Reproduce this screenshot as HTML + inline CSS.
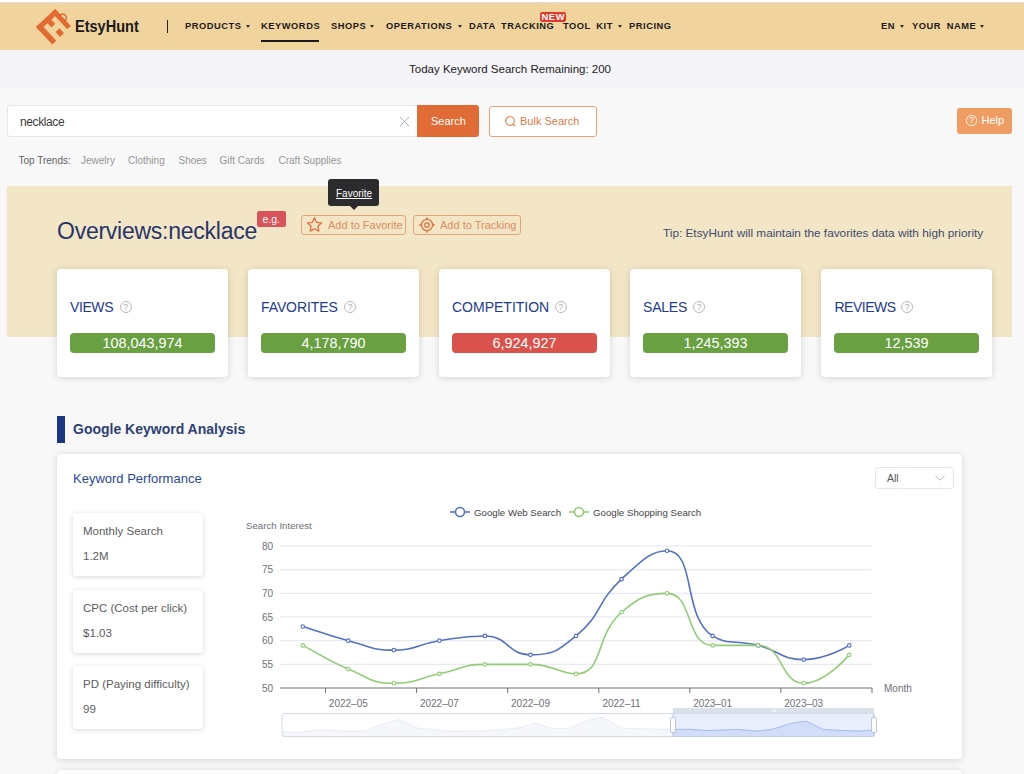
<!DOCTYPE html>
<html><head><meta charset="utf-8">
<style>
*{box-sizing:border-box;margin:0;padding:0}
html,body{width:1024px;height:774px;overflow:hidden}
body{position:relative;background:#f8f8f8;font-family:"Liberation Sans",sans-serif;color:#333}
.a{position:absolute;white-space:nowrap}
#topline{left:0;top:0;width:1024px;height:3px;background:#fff;border-bottom:1px solid #dcdcdc}
#header{left:0;top:3px;width:1024px;height:47px;background:#f0d39d}
.nav{font-size:9.3px;font-weight:bold;color:#1a1a1a;top:21.2px;letter-spacing:0.55px;word-spacing:2.5px}
.caret{left:0;top:0;width:0;height:0;border-left:2.5px solid transparent;border-right:2.5px solid transparent;border-top:3px solid #333}
#subbar{left:0;top:50px;width:1024px;height:39px;background:#f5f4f9}
.card{background:#fff;border-radius:4px;box-shadow:0 1px 7px rgba(0,0,0,0.15)}
.lbl{font-size:14px;color:#233b8c;top:299px}
.q{width:12px;height:12px;border:1px solid #b9b9b9;border-radius:50%;font-size:8.5px;line-height:10px;text-align:center;color:#aaa;top:301px}
.bar{height:20px;width:145px;top:333px;border-radius:4px;color:#fff;font-size:14.4px;line-height:20px;text-align:center}
.green{background:#69a041}
.red{background:#d9534c}
.info{background:#fff;border-radius:3px;box-shadow:0 1px 5px rgba(0,0,0,0.16);left:73px;width:130px;height:63px}
.info .t{position:absolute;left:10px;top:12px;font-size:11.5px;color:#5c5c5c;white-space:nowrap}
.info .v{position:absolute;left:10px;top:37px;font-size:11.5px;color:#5c5c5c;white-space:nowrap}
.trend{top:155px;font-size:10px;color:#969696}
.obtn{height:20px;top:215px;border:1px solid #e7a477;border-radius:3px;background:transparent}
.obtn span{position:absolute;top:3px;font-size:11px;color:#d98c5e}
</style></head><body>
<div class="a" id="topline"></div>
<div class="a" id="header"></div>

<!-- logo -->
<svg class="a" style="left:0;top:0" width="90" height="50" viewBox="0 0 90 50">
<g transform="translate(55.2,9.1) rotate(47)" fill="#e26b34">
<rect x="0" y="0" width="5.1" height="26.3"/>
<rect x="0" y="0" width="23" height="4.9"/>
<rect x="0" y="10" width="10.8" height="5.3"/>
<rect x="0" y="20.8" width="24" height="5.5"/>
<rect x="17" y="10" width="6.6" height="5.5"/>
<path d="M7.9,0.3 A3.6,3.6 0 0 1 15.1,0.3" fill="none" stroke="#e26b34" stroke-width="1.5"/><circle cx="8" cy="0.8" r="0.6" fill="#d9412a"/><circle cx="15" cy="0.8" r="0.6" fill="#d9412a"/>
</g>
</svg>
<div class="a" style="left:74.5px;top:17px;font-size:16.5px;font-weight:bold;color:#1a1a1a;transform:scaleX(0.88);transform-origin:0 0">EtsyHunt</div>
<div class="a" style="left:166.5px;top:19.5px;width:1.6px;height:13px;background:#222"></div>

<div class="a nav" style="left:185px">PRODUCTS</div><div class="a caret" style="left:245.5px;top:25px"></div>
<div class="a nav" style="left:261px">KEYWORDS</div>
<div class="a" style="left:261px;top:40px;width:58px;height:2px;background:#1a1a1a"></div>
<div class="a nav" style="left:331px">SHOPS</div><div class="a caret" style="left:369.5px;top:25px"></div>
<div class="a nav" style="left:386px">OPERATIONS</div><div class="a caret" style="left:457.5px;top:25px"></div>
<div class="a nav" style="left:469px">DATA TRACKING</div>
<div class="a" style="left:540px;top:12px;width:26px;height:10px;background:#e03a2f;border-radius:2px;color:#fff;font-size:9.3px;font-weight:bold;line-height:10.5px;letter-spacing:0.6px;text-indent:0.6px;text-align:center">NEW</div>
<div class="a nav" style="left:563px">TOOL KIT</div><div class="a caret" style="left:617.5px;top:25px"></div>
<div class="a nav" style="left:629px">PRICING</div>
<div class="a nav" style="left:881px">EN</div><div class="a caret" style="left:899.5px;top:25px"></div>
<div class="a nav" style="left:912px">YOUR NAME</div><div class="a caret" style="left:980px;top:25px"></div>

<div class="a" id="subbar"></div>
<div class="a" style="left:409px;top:63px;font-size:11.5px;color:#222">Today Keyword Search Remaining: 200</div>

<!-- search -->
<div class="a" style="left:7px;top:105px;width:411px;height:32px;background:#fff;border:1px solid #e6e6ec;border-radius:3px 0 0 3px"></div>
<div class="a" style="left:20px;top:115px;font-size:12px;color:#3a3a3a;letter-spacing:-0.4px">necklace</div>
<svg class="a" style="left:399px;top:116px" width="11" height="11" viewBox="0 0 11 11"><path d="M1,1 L10,10 M10,1 L1,10" stroke="#b0b4bc" stroke-width="1"/></svg>
<div class="a" style="left:417px;top:105px;width:62px;height:32px;background:#e06b35;border-radius:0 3px 3px 0"></div>
<div class="a" style="left:431px;top:114.5px;font-size:11px;color:#fff">Search</div>
<div class="a" style="left:489px;top:106px;width:108px;height:31px;background:#fff;border:1px solid #eaa27c;border-radius:3px"></div>
<svg class="a" style="left:504px;top:115px" width="13" height="13" viewBox="0 0 13 13"><circle cx="6" cy="6" r="4.3" fill="none" stroke="#e07a45" stroke-width="1.1"/><path d="M9.2,9.2 L11,11" stroke="#e07a45" stroke-width="1.1"/></svg>
<div class="a" style="left:520px;top:115px;font-size:11px;color:#e07a45">Bulk Search</div>
<div class="a" style="left:957px;top:107.5px;width:55px;height:26px;background:#ef9d63;border-radius:3px"></div>
<svg class="a" style="left:965px;top:114px" width="13" height="13" viewBox="0 0 13 13"><circle cx="6.5" cy="6.5" r="5.2" fill="none" stroke="#fff" stroke-width="0.9"/><text x="6.6" y="9.4" text-anchor="middle" font-size="9" fill="#fff" font-family="Liberation Sans">?</text></svg>
<div class="a" style="left:981.5px;top:114px;font-size:11px;color:#fff">Help</div>

<div class="a trend" style="left:18.5px;color:#636363">Top Trends:</div>
<div class="a trend" style="left:81px">Jewelry</div>
<div class="a trend" style="left:128px">Clothing</div>
<div class="a trend" style="left:178.5px">Shoes</div>
<div class="a trend" style="left:219.5px">Gift Cards</div>
<div class="a trend" style="left:278.5px">Craft Supplies</div>

<!-- overview panel -->
<div class="a" style="left:7px;top:186px;width:1005px;height:151px;background:#f3e6c6"></div>
<div class="a" style="left:57px;top:218px;font-size:23px;color:#27356b;letter-spacing:-0.25px">Overviews:necklace</div>
<div class="a" style="left:257px;top:211px;width:28.5px;height:15.5px;background:#d8535a;border-radius:2px;color:#fff;font-size:10.5px;line-height:17px;text-align:center">e.g.</div>

<div class="a" style="left:328px;top:179px;width:51px;height:26.5px;background:#2c2c2e;border-radius:3px"></div>
<div class="a" style="left:348.5px;top:204.5px;width:0;height:0;border-left:5px solid transparent;border-right:5px solid transparent;border-top:5px solid #2c2c2e"></div>
<div class="a" style="left:336px;top:187.5px;font-size:10px;color:#fff;text-decoration:underline">Favorite</div>

<div class="a obtn" style="left:301px;width:105px"><span style="left:26px">Add to Favorite</span></div>
<svg class="a" style="left:305px;top:216px" width="19" height="18" viewBox="0 0 19 18"><path d="M9.5,1.8 L11.6,6.3 L16.5,6.9 L12.9,10.2 L13.8,15.1 L9.5,12.7 L5.2,15.1 L6.1,10.2 L2.5,6.9 L7.4,6.3 Z" fill="none" stroke="#e2703c" stroke-width="1.3" stroke-linejoin="round"/></svg>
<div class="a obtn" style="left:413px;width:108px"><span style="left:26px">Add to Tracking</span></div>
<svg class="a" style="left:418px;top:216px" width="18" height="18" viewBox="0 0 18 18"><circle cx="9" cy="9" r="5.6" fill="none" stroke="#e2703c" stroke-width="1.3"/><circle cx="9" cy="9" r="2.2" fill="none" stroke="#e2703c" stroke-width="1.3"/><path d="M9,1.2 V4 M9,14 V16.8 M1.2,9 H4 M14,9 H16.8" stroke="#e2703c" stroke-width="1.3"/></svg>

<div class="a" style="left:663px;top:225.5px;font-size:11.8px;color:#3d4a6e">Tip: EtsyHunt will maintain the favorites data with high priority</div>

<!-- stat cards -->
<div class="a card" style="left:57px;top:269px;width:171px;height:108px"></div>
<div class="a card" style="left:248px;top:269px;width:171px;height:108px"></div>
<div class="a card" style="left:439px;top:269px;width:171px;height:108px"></div>
<div class="a card" style="left:630px;top:269px;width:171px;height:108px"></div>
<div class="a card" style="left:821px;top:269px;width:171px;height:108px"></div>

<div class="a lbl" style="left:70px;letter-spacing:-0.4px">VIEWS</div><div class="a q" style="left:119.5px">?</div>
<div class="a lbl" style="left:261px;letter-spacing:-0.1px">FAVORITES</div><div class="a q" style="left:344px">?</div>
<div class="a lbl" style="left:452px">COMPETITION</div><div class="a q" style="left:554.5px">?</div>
<div class="a lbl" style="left:643px;letter-spacing:-0.2px">SALES</div><div class="a q" style="left:693px">?</div>
<div class="a lbl" style="left:834.5px;letter-spacing:-0.5px">REVIEWS</div><div class="a q" style="left:901px">?</div>

<div class="a bar green" style="left:70px">108,043,974</div>
<div class="a bar green" style="left:261px">4,178,790</div>
<div class="a bar red" style="left:452px">6,924,927</div>
<div class="a bar green" style="left:643px">1,245,393</div>
<div class="a bar green" style="left:834px">12,539</div>

<!-- section -->
<div class="a" style="left:57px;top:416px;width:8px;height:27px;background:#1c3585"></div>
<div class="a" style="left:73px;top:421px;font-size:14px;font-weight:bold;color:#2e3f74">Google Keyword Analysis</div>

<div class="a card" style="left:57px;top:454px;width:905px;height:304.5px"></div>
<div class="a" style="left:73px;top:471px;font-size:13px;color:#2a4796">Keyword Performance</div>
<div class="a" style="left:875px;top:467px;width:78.5px;height:21.5px;border:1px solid #e4e6eb;border-radius:3px;background:#fff"></div>
<div class="a" style="left:887px;top:472px;font-size:10.5px;color:#555">All</div>
<svg class="a" style="left:934px;top:474px" width="12" height="8" viewBox="0 0 12 8"><path d="M1.5,1.8 L6,6.2 L10.5,1.8" fill="none" stroke="#b9bcc4" stroke-width="1"/></svg>

<div class="a info" style="top:513px"><div class="t">Monthly Search</div><div class="v">1.2M</div></div>
<div class="a info" style="top:589.5px"><div class="t">CPC (Cost per click)</div><div class="v">$1.03</div></div>
<div class="a info" style="top:666px"><div class="t">PD (Paying difficulty)</div><div class="v">99</div></div>

<svg class="a" style="left:0;top:0" width="1024" height="774" viewBox="0 0 1024 774">
<line x1="280" y1="546.0" x2="872" y2="546.0" stroke="#e2e5f2" stroke-width="1"/>
<line x1="280" y1="569.7" x2="872" y2="569.7" stroke="#e2e5f2" stroke-width="1"/>
<line x1="280" y1="593.3" x2="872" y2="593.3" stroke="#e2e5f2" stroke-width="1"/>
<line x1="280" y1="617.0" x2="872" y2="617.0" stroke="#e2e5f2" stroke-width="1"/>
<line x1="280" y1="640.7" x2="872" y2="640.7" stroke="#e2e5f2" stroke-width="1"/>
<line x1="280" y1="664.3" x2="872" y2="664.3" stroke="#e2e5f2" stroke-width="1"/>
<line x1="280" y1="688" x2="872" y2="688" stroke="#6e7079" stroke-width="1"/>
<line x1="325.5" y1="688" x2="325.5" y2="693" stroke="#6e7079" stroke-width="1"/>
<line x1="416.6" y1="688" x2="416.6" y2="693" stroke="#6e7079" stroke-width="1"/>
<line x1="507.7" y1="688" x2="507.7" y2="693" stroke="#6e7079" stroke-width="1"/>
<line x1="598.8" y1="688" x2="598.8" y2="693" stroke="#6e7079" stroke-width="1"/>
<line x1="689.8" y1="688" x2="689.8" y2="693" stroke="#6e7079" stroke-width="1"/>
<line x1="780.9" y1="688" x2="780.9" y2="693" stroke="#6e7079" stroke-width="1"/>
<line x1="872.0" y1="688" x2="872.0" y2="693" stroke="#6e7079" stroke-width="1"/>
<text x="273" y="549.6" text-anchor="end" font-size="10" fill="#6e7079" font-family="Liberation Sans">80</text>
<text x="273" y="573.3" text-anchor="end" font-size="10" fill="#6e7079" font-family="Liberation Sans">75</text>
<text x="273" y="596.9" text-anchor="end" font-size="10" fill="#6e7079" font-family="Liberation Sans">70</text>
<text x="273" y="620.6" text-anchor="end" font-size="10" fill="#6e7079" font-family="Liberation Sans">65</text>
<text x="273" y="644.3" text-anchor="end" font-size="10" fill="#6e7079" font-family="Liberation Sans">60</text>
<text x="273" y="667.9" text-anchor="end" font-size="10" fill="#6e7079" font-family="Liberation Sans">55</text>
<text x="273" y="691.6" text-anchor="end" font-size="10" fill="#6e7079" font-family="Liberation Sans">50</text>
<text x="348.3" y="707" text-anchor="middle" font-size="10" fill="#6e7079" font-family="Liberation Sans">2022–05</text>
<text x="439.4" y="707" text-anchor="middle" font-size="10" fill="#6e7079" font-family="Liberation Sans">2022–07</text>
<text x="530.5" y="707" text-anchor="middle" font-size="10" fill="#6e7079" font-family="Liberation Sans">2022–09</text>
<text x="621.5" y="707" text-anchor="middle" font-size="10" fill="#6e7079" font-family="Liberation Sans">2022–11</text>
<text x="712.6" y="707" text-anchor="middle" font-size="10" fill="#6e7079" font-family="Liberation Sans">2023–01</text>
<text x="803.7" y="707" text-anchor="middle" font-size="10" fill="#6e7079" font-family="Liberation Sans">2023–03</text>
<text x="884" y="691.5" font-size="10" fill="#6e7079" font-family="Liberation Sans">Month</text>
<text x="246" y="528.5" font-size="9.7" fill="#6e7079" font-family="Liberation Sans">Search Interest</text>
<path d="M302.77,626.47 C325.54,633.57 325.25,634.68 348.31,640.67 C370.79,646.51 371.08,650.13 393.85,650.13 C416.62,650.13 416.44,644.24 439.38,640.67 C461.97,637.14 463.00,635.93 484.92,635.93 C508.54,635.93 507.69,654.87 530.46,654.87 C553.23,654.87 557.61,651.23 576.00,635.93 C603.15,613.36 595.32,603.66 621.54,579.13 C640.86,561.06 650.81,550.73 667.08,550.73 C696.35,550.73 681.88,616.27 712.62,635.93 C727.41,645.40 735.67,639.56 758.15,645.40 C781.21,651.39 780.92,659.60 803.69,659.60 C826.46,659.60 849.23,645.40 849.23,645.40" fill="none" stroke="#5470c6" stroke-width="1.6"/>
<circle cx="302.77" cy="626.47" r="1.75" fill="#fff" stroke="#5470c6" stroke-width="1.15"/>
<circle cx="348.31" cy="640.67" r="1.75" fill="#fff" stroke="#5470c6" stroke-width="1.15"/>
<circle cx="393.85" cy="650.13" r="1.75" fill="#fff" stroke="#5470c6" stroke-width="1.15"/>
<circle cx="439.38" cy="640.67" r="1.75" fill="#fff" stroke="#5470c6" stroke-width="1.15"/>
<circle cx="484.92" cy="635.93" r="1.75" fill="#fff" stroke="#5470c6" stroke-width="1.15"/>
<circle cx="530.46" cy="654.87" r="1.75" fill="#fff" stroke="#5470c6" stroke-width="1.15"/>
<circle cx="576.00" cy="635.93" r="1.75" fill="#fff" stroke="#5470c6" stroke-width="1.15"/>
<circle cx="621.54" cy="579.13" r="1.75" fill="#fff" stroke="#5470c6" stroke-width="1.15"/>
<circle cx="667.08" cy="550.73" r="1.75" fill="#fff" stroke="#5470c6" stroke-width="1.15"/>
<circle cx="712.62" cy="635.93" r="1.75" fill="#fff" stroke="#5470c6" stroke-width="1.15"/>
<circle cx="758.15" cy="645.40" r="1.75" fill="#fff" stroke="#5470c6" stroke-width="1.15"/>
<circle cx="803.69" cy="659.60" r="1.75" fill="#fff" stroke="#5470c6" stroke-width="1.15"/>
<circle cx="849.23" cy="645.40" r="1.75" fill="#fff" stroke="#5470c6" stroke-width="1.15"/>
<path d="M302.77,645.40 C325.54,657.23 324.71,659.25 348.31,669.07 C370.24,678.19 370.79,683.27 393.85,683.27 C416.33,683.27 416.62,678.53 439.38,673.80 C462.15,669.07 461.91,664.33 484.92,664.33 C507.45,664.33 507.93,664.33 530.46,664.33 C553.47,664.33 558.79,673.80 576.00,673.80 C604.33,673.80 593.84,636.74 621.54,612.27 C639.38,596.50 648.12,593.33 667.08,593.33 C693.66,593.33 685.16,645.40 712.62,645.40 C730.69,645.40 738.36,645.40 758.15,645.40 C783.90,645.40 779.80,683.27 803.69,683.27 C825.34,683.27 849.23,654.87 849.23,654.87" fill="none" stroke="#91cc75" stroke-width="1.6"/>
<circle cx="302.77" cy="645.40" r="1.75" fill="#fff" stroke="#91cc75" stroke-width="1.15"/>
<circle cx="348.31" cy="669.07" r="1.75" fill="#fff" stroke="#91cc75" stroke-width="1.15"/>
<circle cx="393.85" cy="683.27" r="1.75" fill="#fff" stroke="#91cc75" stroke-width="1.15"/>
<circle cx="439.38" cy="673.80" r="1.75" fill="#fff" stroke="#91cc75" stroke-width="1.15"/>
<circle cx="484.92" cy="664.33" r="1.75" fill="#fff" stroke="#91cc75" stroke-width="1.15"/>
<circle cx="530.46" cy="664.33" r="1.75" fill="#fff" stroke="#91cc75" stroke-width="1.15"/>
<circle cx="576.00" cy="673.80" r="1.75" fill="#fff" stroke="#91cc75" stroke-width="1.15"/>
<circle cx="621.54" cy="612.27" r="1.75" fill="#fff" stroke="#91cc75" stroke-width="1.15"/>
<circle cx="667.08" cy="593.33" r="1.75" fill="#fff" stroke="#91cc75" stroke-width="1.15"/>
<circle cx="712.62" cy="645.40" r="1.75" fill="#fff" stroke="#91cc75" stroke-width="1.15"/>
<circle cx="758.15" cy="645.40" r="1.75" fill="#fff" stroke="#91cc75" stroke-width="1.15"/>
<circle cx="803.69" cy="683.27" r="1.75" fill="#fff" stroke="#91cc75" stroke-width="1.15"/>
<circle cx="849.23" cy="654.87" r="1.75" fill="#fff" stroke="#91cc75" stroke-width="1.15"/>
<line x1="450" y1="512" x2="470" y2="512" stroke="#5470c6" stroke-width="1.6"/>
<circle cx="460" cy="512" r="4.5" fill="#fff" stroke="#5470c6" stroke-width="1.6"/>
<text x="474" y="515.5" font-size="9.7" fill="#444" font-family="Liberation Sans">Google Web Search</text>
<line x1="569" y1="512" x2="589" y2="512" stroke="#91cc75" stroke-width="1.6"/>
<circle cx="579" cy="512" r="4.5" fill="#fff" stroke="#91cc75" stroke-width="1.6"/>
<text x="593" y="515.5" font-size="9.7" fill="#444" font-family="Liberation Sans">Google Shopping Search</text>
<rect x="282" y="713.5" width="592" height="23.0" rx="2" fill="none" stroke="#d2dbee" stroke-width="1"/>
<polygon points="282.0,736.5 282.0,731.6 299.0,732.4 315.0,730.4 333.0,730.4 349.0,731.4 365.0,731.0 383.0,724.0 399.0,719.6 417.0,728.0 433.0,729.6 449.0,731.4 467.0,731.0 486.4,730.8 502.8,729.7 519.2,727.7 535.6,723.0 552.0,728.3 569.5,728.3 586.9,720.5 603.3,717.4 620.7,728.1 637.1,728.7 654.6,729.1 673.0,729.4 690.8,729.4 706.0,730.6 722.0,730.0 737.8,729.4 756.0,731.1 772.0,729.4 792.4,723.0 806.3,721.2 822.8,729.4 843.0,730.6 858.4,731.1 874.0,730.1 874.0,736.5" fill="#d2dbee" fill-opacity="0.22"/>
<polyline points="282.0,731.6 299.0,732.4 315.0,730.4 333.0,730.4 349.0,731.4 365.0,731.0 383.0,724.0 399.0,719.6 417.0,728.0 433.0,729.6 449.0,731.4 467.0,731.0 486.4,730.8 502.8,729.7 519.2,727.7 535.6,723.0 552.0,728.3 569.5,728.3 586.9,720.5 603.3,717.4 620.7,728.1 637.1,728.7 654.6,729.1 673.0,729.4 690.8,729.4 706.0,730.6 722.0,730.0 737.8,729.4 756.0,731.1 772.0,729.4 792.4,723.0 806.3,721.2 822.8,729.4 843.0,730.6 858.4,731.1 874.0,730.1" fill="none" stroke="#d2dbee" stroke-width="0.6" stroke-opacity="0.8"/>
<rect x="673" y="713.5" width="201" height="23.0" fill="#879ff6" fill-opacity="0.18"/>
<polygon points="673.0,736.5 673.0,729.4 690.8,729.4 706.0,730.6 722.0,730.0 737.8,729.4 756.0,731.1 772.0,729.4 792.4,723.0 806.3,721.2 822.8,729.4 843.0,730.6 858.4,731.1 874.0,730.1 874.0,736.5" fill="#8fb0f7" fill-opacity="0.17"/>
<polyline points="673.0,729.4 690.8,729.4 706.0,730.6 722.0,730.0 737.8,729.4 756.0,731.1 772.0,729.4 792.4,723.0 806.3,721.2 822.8,729.4 843.0,730.6 858.4,731.1 874.0,730.1" fill="none" stroke="#8fb0f7" stroke-width="0.7"/>
<rect x="673" y="708" width="201" height="5.5" fill="#dbe0ea" fill-opacity="1"/>
<line x1="673" y1="713.5" x2="673" y2="736.5" stroke="#b8c6e6" stroke-width="1"/>
<line x1="874" y1="713.5" x2="874" y2="736.5" stroke="#b8c6e6" stroke-width="1"/>
<rect x="670.5" y="717.5" width="5" height="15" rx="1.5" fill="#fff" stroke="#acb8d1" stroke-width="0.8"/>
<rect x="871.5" y="717.5" width="5" height="15" rx="1.5" fill="#fff" stroke="#acb8d1" stroke-width="0.8"/>
<rect x="772" y="709.6" width="0.8" height="2.4" fill="#fff"/>
<rect x="773.7" y="709.6" width="0.8" height="2.4" fill="#fff"/>
<rect x="775.4" y="709.6" width="0.8" height="2.4" fill="#fff"/>
</svg>

<div class="a card" style="left:57px;top:770px;width:905px;height:40px"></div>
</body></html>
